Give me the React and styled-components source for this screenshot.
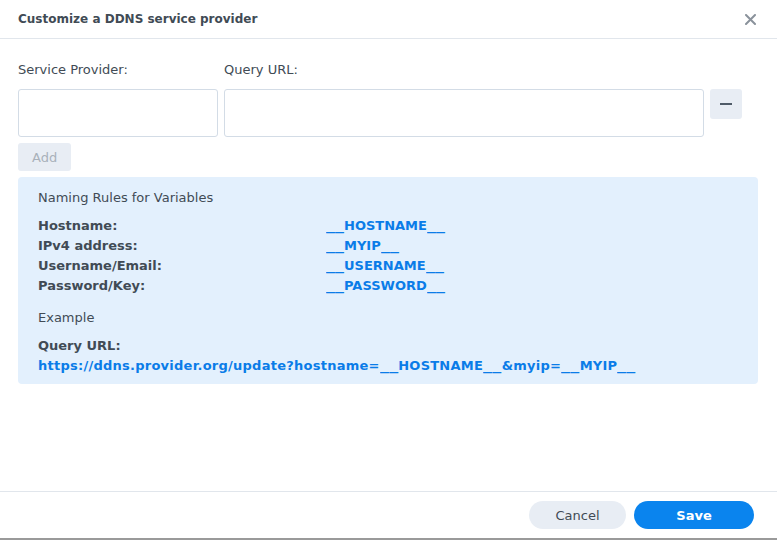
import styled, { createGlobalStyle } from "styled-components";

const GlobalStyle = createGlobalStyle`
  html, body {
    margin: 0;
    padding: 0;
    background: #ffffff;
  }
  body {
    font-family: "DejaVu Sans", Verdana, sans-serif;
    font-size: 13px;
    color: #414b55;
  }
`;

const Dialog = styled.div`
  width: 777px;
  height: 540px;
  display: flex;
  flex-direction: column;
  box-sizing: border-box;
  border-bottom: 2px solid #9a9a9a;
`;

const Header = styled.div`
  height: 38px;
  display: flex;
  align-items: center;
  justify-content: space-between;
  padding: 0 19px 0 18px;
  border-bottom: 1px solid #e1e6ec;
`;

const Title = styled.div`
  font-weight: bold;
  font-size: 12px;
  color: #414b55;
`;

const CloseButton = styled.button`
  border: 0;
  background: none;
  padding: 0;
  width: 16px;
  height: 16px;
  display: flex;
  align-items: center;
  justify-content: center;
  cursor: pointer;
`;

const Body = styled.div`
  flex: 1;
  padding: 21px 19px 0 18px;
`;

const FieldRow = styled.div`
  display: flex;
  align-items: flex-start;
  gap: 6px;
`;

const Field = styled.div`
  display: flex;
  flex-direction: column;
  width: ${(p) => p.width}px;
`;

const Label = styled.label`
  height: 19px;
  line-height: 19px;
  margin-bottom: 10px;
`;

const Input = styled.input`
  box-sizing: border-box;
  height: 48px;
  width: 100%;
  border: 1px solid #d3dce6;
  border-radius: 3px;
  background: #fff;
  outline: none;
`;

const MinusButton = styled.button`
  margin-top: 29px;
  width: 32px;
  height: 30px;
  border: 0;
  border-radius: 3px;
  background: #e8edf4;
  display: flex;
  align-items: center;
  justify-content: center;
  padding: 0;
`;

const MinusBar = styled.span`
  width: 12px;
  height: 2px;
  background: #4f5b68;
`;

const AddButton = styled.button`
  margin-top: 6px;
  height: 28px;
  padding: 0 14px;
  border: 0;
  border-radius: 3px;
  background: #e8edf4;
  color: #a9b1ba;
  font-family: inherit;
  font-size: 13px;
`;

const InfoBox = styled.div`
  margin-top: 6px;
  background: #e3f0fd;
  border-radius: 4px;
  padding: 11px 20px 8px 20px;
  line-height: 20px;
`;

const SectionTitle = styled.div`
  margin-bottom: 8px;
`;

const RuleGrid = styled.div`
  display: grid;
  grid-template-columns: 288px 1fr;
  font-weight: bold;
`;

const Value = styled.span`
  color: #0a7ce8;
  font-weight: bold;
`;

// Verdana draws underscores wider than DejaVu does: stretch the run and
// reserve the extra room it takes
const Wide = styled.span`
  display: inline-block;
  transform: scaleX(1.38);
  transform-origin: left center;
  margin-right: ${(p) => p.n * 2.5}px;
`;

const ExampleTitle = styled.div`
  margin-top: 12px;
  margin-bottom: 8px;
`;

const Strong = styled.div`
  font-weight: bold;
`;

const Url = styled.div`
  color: #0a7ce8;
  font-weight: bold;
  letter-spacing: 0.25px;
`;

const Footer = styled.div`
  border-top: 1px solid #e1e6ec;
  height: 47px;
  display: flex;
  justify-content: flex-end;
  align-items: flex-start;
  gap: 8px;
  padding: 9px 23px 0 0;
  box-sizing: border-box;
`;

const PillButton = styled.button`
  height: 28px;
  width: ${(p) => p.width}px;
  border: 0;
  border-radius: 14px;
  font-family: inherit;
  font-size: 13px;
  background: ${(p) => (p.primary ? "#0a84ee" : "#e8edf4")};
  color: ${(p) => (p.primary ? "#ffffff" : "#414b55")};
  font-weight: ${(p) => (p.primary ? "bold" : "normal")};
`;

const rules = [
  ["Hostname:", "__HOSTNAME__"],
  ["IPv4 address:", "__MYIP__"],
  ["Username/Email:", "__USERNAME__"],
  ["Password/Key:", "__PASSWORD__"],
];

const withWideUnderscores = (text) =>
  text.split(/(_+)/).map((part, i) =>
    part.startsWith("_") ? (
      <Wide key={i} n={part.length}>
        {part}
      </Wide>
    ) : (
      part
    )
  );

const App = () => {
  return (
    <>
      <GlobalStyle />
      <Dialog>
        <Header>
          <Title>Customize a DDNS service provider</Title>
          <CloseButton aria-label="Close">
            <svg width="11" height="11" viewBox="0 0 11 11">
              <path d="M1 1 L10 10 M10 1 L1 10" stroke="#8a929b" strokeWidth="2" strokeLinecap="round" />
            </svg>
          </CloseButton>
        </Header>
        <Body>
          <FieldRow>
            <Field width={200}>
              <Label>Service Provider:</Label>
              <Input />
            </Field>
            <Field width={480}>
              <Label>Query URL:</Label>
              <Input />
            </Field>
            <MinusButton aria-label="Remove">
              <MinusBar />
            </MinusButton>
          </FieldRow>
          <AddButton disabled>Add</AddButton>
          <InfoBox>
            <SectionTitle>Naming Rules for Variables</SectionTitle>
            <RuleGrid>
              {rules.map(([k, v]) => [
                <span key={k}>{k}</span>,
                <Value key={v}>{withWideUnderscores(v)}</Value>,
              ])}
            </RuleGrid>
            <ExampleTitle>Example</ExampleTitle>
            <Strong>Query URL:</Strong>
            <Url>
              {withWideUnderscores(
                "https://ddns.provider.org/update?hostname=__HOSTNAME__&myip=__MYIP__"
              )}
            </Url>
          </InfoBox>
        </Body>
        <Footer>
          <PillButton width={97}>Cancel</PillButton>
          <PillButton width={120} primary>
            Save
          </PillButton>
        </Footer>
      </Dialog>
    </>
  );
};

export default App;
